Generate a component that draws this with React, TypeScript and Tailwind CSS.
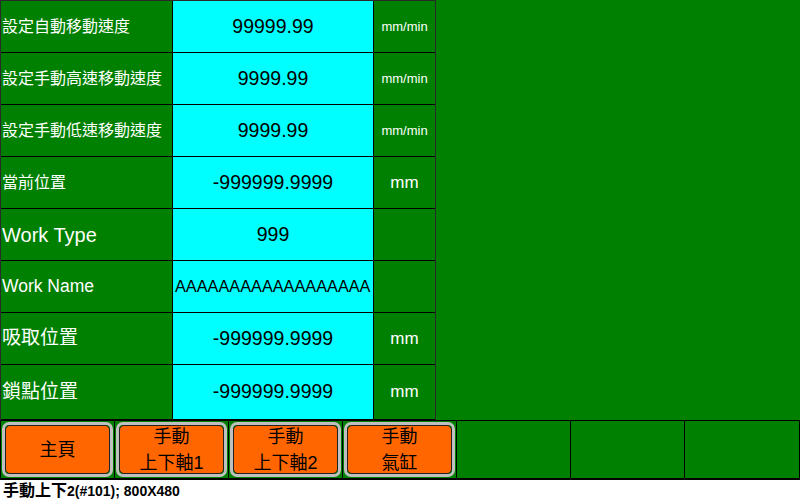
import React from "react";

type Row = {
  label: string;
  labelSize: string;
  value: string;
  unit: string;
  unitSize: string;
  height: string;
  left?: boolean;
};

const rows: Row[] = [
  { label: "設定自動移動速度", labelSize: "text-[16px]", value: "99999.99", unit: "mm/min", unitSize: "text-[13px]", height: "h-[52px]" },
  { label: "設定手動高速移動速度", labelSize: "text-[16px]", value: "9999.99", unit: "mm/min", unitSize: "text-[13px]", height: "h-[52px]" },
  { label: "設定手動低速移動速度", labelSize: "text-[16px]", value: "9999.99", unit: "mm/min", unitSize: "text-[13px]", height: "h-[52px]" },
  { label: "當前位置", labelSize: "text-[16px]", value: "-999999.9999", unit: "mm", unitSize: "text-[17px]", height: "h-[52px]" },
  { label: "Work Type", labelSize: "text-[20px]", value: "999", unit: "", unitSize: "text-[17px]", height: "h-[52px]" },
  { label: "Work Name", labelSize: "text-[17.5px]", value: "AAAAAAAAAAAAAAAAAA", unit: "", unitSize: "text-[17px]", height: "h-[52px]", left: true },
  { label: "吸取位置", labelSize: "text-[19px]", value: "-999999.9999", unit: "mm", unitSize: "text-[17px]", height: "h-[52px]" },
  { label: "鎖點位置", labelSize: "text-[19px]", value: "-999999.9999", unit: "mm", unitSize: "text-[17px]", height: "h-[55px]" },
];

const buttons: string[][] = [["主頁"], ["手動", "上下軸1"], ["手動", "上下軸2"], ["手動", "氣缸"]];

function HmiButton({ lines }: { lines: string[] }) {
  return (
    <div className="h-full w-full p-px">
      <div className="h-full w-full rounded-[7px] border-[3px] border-[#c0c0c0]">
        <div className="flex h-full w-full flex-col items-center justify-center rounded-[5px] border border-[#222] bg-[#ff6600] text-[18px] leading-[26px] text-black">
          {lines.map((l, i) => (
            <div key={i} className="whitespace-nowrap">
              {l}
            </div>
          ))}
        </div>
      </div>
    </div>
  );
}

export default function App() {
  return (
    <div className="flex h-[502px] w-[800px] flex-col overflow-hidden bg-white font-['Liberation_Sans','Noto_Sans_CJK_TC',sans-serif]">
      <div className="h-[420px] w-full bg-[#008000]">
        <div className="w-[436px] border-l border-r border-t border-[#2a2a2a]">
          {rows.map((r, i) => (
            <div key={i} className={`flex ${r.height} border-b border-black`}>
              <div className={`flex w-[172px] items-center border-r border-black pl-px text-white ${r.labelSize} whitespace-nowrap`}>
                {r.label}
              </div>
              <div
                className={`flex w-[201px] items-center overflow-hidden border-r border-black bg-[#00ffff] text-black whitespace-nowrap ${
                  r.left ? "justify-start pl-[2px] text-[16.3px]" : "justify-center text-[19.5px]"
                }`}
              >
                {r.value}
              </div>
              <div className={`flex w-[61px] items-center justify-center text-white ${r.unitSize}`}>{r.unit}</div>
            </div>
          ))}
        </div>
      </div>
      <div className="flex h-[60px] w-full border-b border-t border-black bg-[#008000]">
        {Array.from({ length: 7 }).map((_, i) => (
          <div
            key={i}
            className={`h-full border-b border-l border-black ${i === 6 ? "w-[116px] border-r" : "w-[114px]"}`}
          >
            {i < 4 ? <HmiButton lines={buttons[i]} /> : null}
          </div>
        ))}
      </div>
      <div className="flex h-[22px] items-center pl-[3px] font-bold text-black">
        <span className="text-[16px] leading-none">手動上下</span>
        <span className="text-[14px] leading-none">2(#101); 800X480</span>
      </div>
    </div>
  );
}
